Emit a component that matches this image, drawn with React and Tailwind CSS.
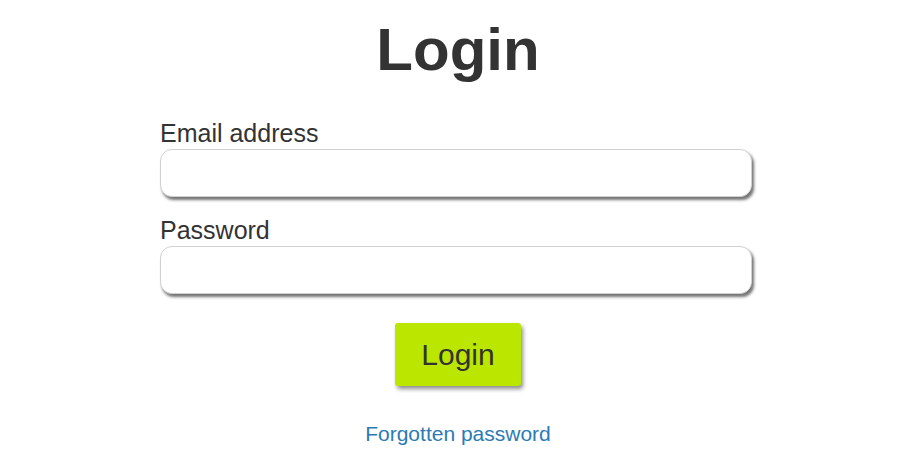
export default function App() {
  return (
    <div className="w-[900px] h-[456px] bg-white font-['Liberation_Sans',Arial,sans-serif] text-[#333]">
      <div className="ml-[160px] w-[592px] pt-5 flex flex-col">
        <h1 className="pl-1 text-center text-[60px] leading-none font-bold text-[#333]">Login</h1>
        <label className="mt-[38px] text-[25px] leading-[30px]">Email address</label>
        <input
          type="email"
          className="mt-px h-[48px] w-full rounded-[12px] border border-[#d0d0d0] bg-white shadow-[2px_3px_3px_rgba(0,0,0,0.55)] outline-none"
        />
        <label className="mt-[18px] text-[25px] leading-[30px]">Password</label>
        <input
          type="password"
          className="mt-px h-[48px] w-full rounded-[12px] border border-[#d0d0d0] bg-white shadow-[2px_3px_3px_rgba(0,0,0,0.55)] outline-none"
        />
        <div className="mt-[29px] flex justify-center pl-1">
          <button className="h-[63px] w-[126px] rounded-[3px] bg-[#bbe600] text-[30px] text-[#333] shadow-[2px_3px_4px_rgba(0,0,0,0.45)]">
            Login
          </button>
        </div>
        <a href="#" className="mt-[36px] self-center ml-1 text-[21px] leading-[24px] text-[#2b7bb3]">
          Forgotten password
        </a>
      </div>
    </div>
  );
}
